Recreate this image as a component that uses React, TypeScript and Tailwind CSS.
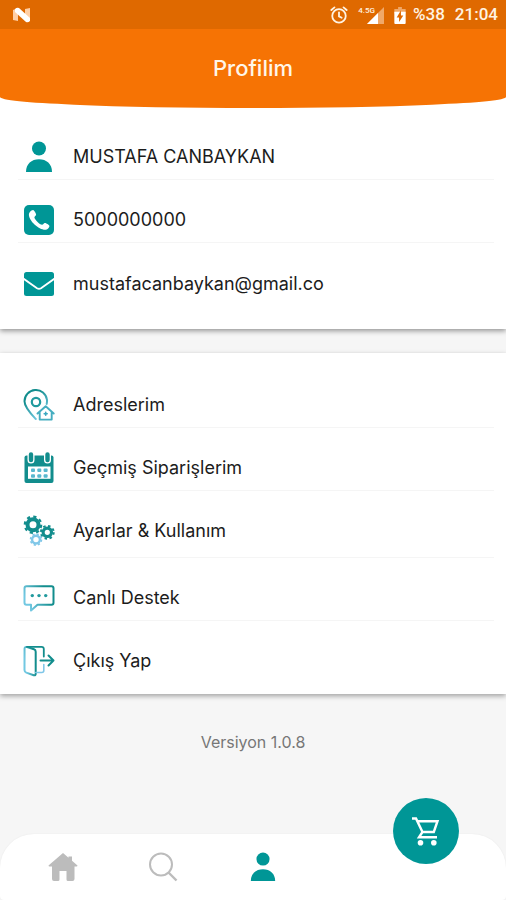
import type { ReactNode } from "react";

type RowProps = { icon: ReactNode; label: string };

function Gradients() {
  return (
    <svg width="0" height="0" className="absolute" aria-hidden="true">
      <defs>
        <linearGradient id="fade-down" x1="0" y1="0" x2="0.6" y2="1">
          <stop offset="0.3" stopColor="#128d8d" />
          <stop offset="1" stopColor="#72c8e2" />
        </linearGradient>
        <linearGradient id="fade-left" x1="1" y1="0" x2="0" y2="0.4">
          <stop offset="0.3" stopColor="#128d8d" />
          <stop offset="1" stopColor="#72c8e2" />
        </linearGradient>
      </defs>
    </svg>
  );
}

function PersonIcon({ className }: { className: string }) {
  return (
    <svg viewBox="0 0 32 32" className={className} fill="currentColor" aria-hidden="true">
      <circle cx="16" cy="7.5" r="7" />
      <path d="M3 31C3 23 8.500 18.300 16 18.300S29 23 29 31z" />
    </svg>
  );
}

function PhoneIcon() {
  return (
    <svg viewBox="0 0 32 32" className="size-8" aria-hidden="true">
      <rect x="1" y="1" width="30" height="30" rx="5" fill="#009696" />
      <path
        d="M7.300 7.600c.7-.9 1.800-1.700 2.900-1.600.9.100 3 3.700 2.900 4.700-.1.900-1.700 1.700-1.700 2.600 0 2.200 5.300 7.500 7.700 7.500 1 0 1.700-1.800 2.700-1.900 1-.1 4.400 1.800 4.600 2.800.3 1.300-1.800 3.700-3.400 4.100C16.600 26.700 5.800 17.300 5.900 10.600c0-1.100.6-2.200 1.400-3z"
        fill="#fff"
      />
    </svg>
  );
}

function MailIcon() {
  return (
    <svg viewBox="0 0 32 32" className="size-8" aria-hidden="true">
      <rect x="1" y="4" width="30" height="24" rx="2.500" fill="#009696" />
      <path d="M0 10.300 14 20.200q2 1.300 4 0L32 10.300" fill="none" stroke="#fff" strokeWidth="1.800" />
    </svg>
  );
}

function AddressIcon() {
  return (
    <svg viewBox="0 0 32 32" className="size-8" fill="none" strokeLinejoin="round" strokeLinecap="round" aria-hidden="true">
      <path
        d="M12.800 30C8.500 25.500 1.500 18.500 1.500 12.300A11.300 11.300 0 0 1 24 10.800c.1 1.500 0 2.800-.3 4.200"
        stroke="url(#fade-down)"
        strokeWidth="2"
      />
      <circle cx="13" cy="13" r="4.200" stroke="#219a9e" strokeWidth="2.200" />
      <path d="m14.500 24.500 8.200-7.300 8 7.300M16.700 23v7.600h12V23" stroke="#45adc0" strokeWidth="1.900" />
      <path d="M22.700 23.200v3M21.200 24.700h3" stroke="#3aa8c0" strokeWidth="1.600" />
    </svg>
  );
}

function CalendarIcon() {
  return (
    <svg viewBox="0 0 32 32" className="size-8" aria-hidden="true">
      <path d="M1.500 5.500q0-2 2-2h25q2 0 2 2V29q0 2-2 2h-25q-2 0-2-2z" fill="#128d8d" />
      <path d="M5 14.500h22.500v12.300H5z" fill="#fff" />
      <path d="M8 1v7M24.500 1v7" stroke="#fff" strokeWidth="7" strokeLinecap="round" />
      <path d="M8 2.500v5.500M24.500 2.500v5.500" stroke="#128d8d" strokeWidth="4.400" strokeLinecap="round" />
      <g fill="#58b8cf">
        <rect x="8" y="16.500" width="4" height="3.500" rx="1" />
        <rect x="14.300" y="16.500" width="4" height="3.500" rx="1" />
        <rect x="20.600" y="16.500" width="4" height="3.500" rx="1" />
        <rect x="8" y="22.200" width="4" height="3.500" rx="1" />
        <rect x="14.300" y="22.200" width="4" height="3.500" rx="1" />
        <rect x="20.600" y="22.200" width="4" height="3.500" rx="1" />
      </g>
    </svg>
  );
}

function GearsIcon() {
  return (
    <svg viewBox="0 0 32 32" className="size-8" fill="none" aria-hidden="true">
      <circle cx="10" cy="9.800" r="5.500" stroke="#128d8d" strokeWidth="4" />
      <circle cx="10" cy="9.800" r="8.200" stroke="#128d8d" strokeWidth="2.200" strokeDasharray="3.220 3.220" />
      <circle cx="24.300" cy="17.300" r="4.200" stroke="#128d8d" strokeWidth="3.200" />
      <circle cx="24.300" cy="17.300" r="6.400" stroke="#128d8d" strokeWidth="2" strokeDasharray="2.513 2.513" />
      <circle cx="13" cy="24.600" r="3.900" stroke="#80c7e8" strokeWidth="2.400" />
      <circle cx="13" cy="24.600" r="5.500" stroke="#80c7e8" strokeWidth="1.600" strokeDasharray="2.160 2.160" />
    </svg>
  );
}

function ChatIcon() {
  return (
    <svg viewBox="0 0 32 32" className="size-8" fill="none" aria-hidden="true">
      <path
        d="M3.500 4.300h25q2 0 2 2v14.500q0 2-2 2H14.500L8 28.500v-5.700H3.500q-2 0-2-2V6.300q0-2 2-2z"
        stroke="url(#fade-left)"
        strokeWidth="2"
        strokeLinejoin="round"
      />
      <g fill="#219a9e">
        <circle cx="9.300" cy="13.600" r="1.700" />
        <circle cx="16" cy="13.600" r="1.700" />
        <circle cx="22.700" cy="13.600" r="1.700" />
      </g>
    </svg>
  );
}

function ExitIcon() {
  return (
    <svg viewBox="0 0 32 32" className="size-8" fill="none" strokeWidth="2" strokeLinecap="round" strokeLinejoin="round" aria-hidden="true">
      <path
        d="M1.500 3.800Q1.500 1.500 4 2l7 2.300q1.700.6 1.700 2.500v22q0 1.900-2 1.400L3.200 27.600q-1.700-.6-1.700-2.500z"
        stroke="url(#fade-left)"
      />
      <path d="M4 1.800h14.500q2.300 0 2.300 2.300v7.500" stroke="#128d8d" strokeWidth="1.800" />
      <path d="M20.800 19.500v6q0 2-2 2h-6" stroke="#80c7e8" strokeWidth="1.600" />
      <path d="M17.500 15.500h13M25.500 10.500l5 5-5 5" stroke="#128d8d" />
    </svg>
  );
}

function StatusBar() {
  return (
    <div className="flex h-[29px] items-center bg-[#df6900] pt-px pr-2 pl-3 font-[Roboto,sans-serif] text-[17px] font-medium text-[#fff3e2]">
      <svg viewBox="0 0 20 16" className="h-4 w-5" aria-hidden="true">
        <path d="M1 3l5-2v13l-5-1zM13 2l5-1v12l-5 1z" fill="#ffcfa6" />
        <path d="M3 2q2-2 4-1l11 10v3q-2 2-4 1L3 5z" fill="#fff" />
      </svg>
      <svg viewBox="0 0 20 20" className="ml-auto size-[18px]" fill="none" stroke="currentColor" strokeWidth="2" strokeLinecap="round" aria-hidden="true">
        <circle cx="10" cy="11" r="7.500" />
        <path d="M10 7v4.500l3 1.500M1.500 4.500 5 1.500M18.500 4.500 15 1.500" />
      </svg>
      <div className="ml-[10px] flex items-start">
        <span className="-mr-2 text-[8px] leading-[8px]">4.5G</span>
        <svg viewBox="0 0 17 17" className="size-[17px]" aria-hidden="true">
          <path d="M17 0v17H0z" fill="#f0a868" />
          <path d="M11 6v11H0z" fill="#fff" />
        </svg>
      </div>
      <svg viewBox="0 0 12 18" className="ml-[10px] h-[17px] w-3" aria-hidden="true">
        <path d="M4 0h4v2h4v5H0V2h4z" fill="#f0a868" />
        <path d="M0 5h12v12q0 1-1 1H1q-1 0-1-1z" fill="#fff" />
        <path d="M7 3.500 2.500 11H5v5l4.500-7H7z" fill="#df6900" />
      </svg>
      <span className="ml-[7px]">%38</span>
      <span className="ml-[10px]">21:04</span>
    </div>
  );
}

function InfoRow({ icon, label }: RowProps) {
  return (
    <li className="flex h-[63px] items-center gap-[18px] border-b border-[#f5f5f5] pt-[18px] pl-[5px] text-lg last:border-0">
      {icon}
      <span>{label}</span>
    </li>
  );
}

function LinkRow({ icon, label }: RowProps) {
  return (
    <li className="border-b border-[#f5f5f5]">
      <button type="button" className="flex h-[62px] w-full cursor-pointer items-center gap-[18px] pt-[18px] pl-[5px] text-left text-lg">
        {icon}
        <span>{label}</span>
      </button>
    </li>
  );
}

export default function App() {
  return (
    <div className="flex min-h-screen flex-col bg-[#f6f6f6] font-[Inter,sans-serif] text-[#1c1c1c]">
      <Gradients />
      <section className="bg-white pb-[23px] shadow-[0_2px_5px_rgba(0,0,0,0.4)]">
        <header className="overflow-hidden rounded-b-[50%_11px] bg-[#f67304]">
          <StatusBar />
          <h1 className="pt-6 pb-[25px] text-center text-[22px] leading-[30px] font-medium text-[#fff6e8]">Profilim</h1>
        </header>
        <ul className="mt-[9px] mr-3 ml-[18px]">
          <InfoRow icon={<PersonIcon className="size-8 text-[#009696]" />} label="MUSTAFA CANBAYKAN" />
          <InfoRow icon={<PhoneIcon />} label="5000000000" />
          <InfoRow icon={<MailIcon />} label="mustafacanbaykan@gmail.co" />
        </ul>
      </section>

      <section className="mt-6 bg-white pt-3 pb-[11px] shadow-[0_2px_5px_rgba(0,0,0,0.35)]">
        <ul className="mr-3 ml-[18px] [&>li:last-child]:pb-1">
          <LinkRow icon={<AddressIcon />} label="Adreslerim" />
          <LinkRow icon={<CalendarIcon />} label="Geçmiş Siparişlerim" />
          <LinkRow icon={<GearsIcon />} label="Ayarlar & Kullanım" />
        </ul>
        <ul className="mr-3 ml-[18px] [&>li:last-child]:border-0">
          <LinkRow icon={<ChatIcon />} label="Canlı Destek" />
          <LinkRow icon={<ExitIcon />} label="Çıkış Yap" />
        </ul>
      </section>

      <p className="mt-9 mb-10 text-center text-base text-[#777]">Versiyon 1.0.8</p>

      <nav className="relative mt-auto flex h-[66px] rounded-t-[34px] rounded-b-sm bg-white pl-[13px] shadow-[0_0_2px_rgba(0,0,0,0.06)]">
        <button type="button" aria-label="Ana sayfa" className="flex w-[100px] cursor-pointer items-center justify-center text-[#bcbcbc]">
          <svg viewBox="0 0 30 30" className="size-[30px]" fill="currentColor" aria-hidden="true">
            <path d="M15 1 .5 13.500q0 1 1 1H4V27q0 2 2 2h4q1.500 0 1.500-1.500V19h7v8.500Q18.500 29 20 29h4.500q2 0 2-2V14.500h2q1 0 1-1L24 8.800V4.500h-3.500v1.300z" />
          </svg>
        </button>
        <button type="button" aria-label="Ara" className="flex w-[100px] cursor-pointer items-center justify-center text-[#bcbcbc]">
          <svg viewBox="0 0 30 30" className="size-[30px]" fill="none" stroke="currentColor" strokeWidth="2" aria-hidden="true">
            <circle cx="13" cy="12.500" r="11" />
            <path d="m20.500 20.500 8 8" strokeWidth="2.400" />
          </svg>
        </button>
        <button type="button" aria-label="Profil" className="flex w-[100px] cursor-pointer items-center justify-center text-[#009696]">
          <PersonIcon className="size-[30px]" />
        </button>
        <button
          type="button"
          aria-label="Sepet"
          className="absolute -top-9 right-[47px] flex size-[66px] cursor-pointer items-center justify-center rounded-full bg-[#009696] text-white"
        >
          <svg viewBox="0 0 30 30" className="size-[30px]" fill="none" stroke="currentColor" strokeWidth="2.400" aria-hidden="true">
            <path d="M1 2.500h4L11.500 16h11.300L26.500 5.200H6.500M11.500 16 8 21.300h18" />
            <circle cx="9.500" cy="26.800" r="2.800" fill="currentColor" stroke="none" />
            <circle cx="22.800" cy="26.800" r="2.800" fill="currentColor" stroke="none" />
          </svg>
        </button>
      </nav>
    </div>
  );
}
